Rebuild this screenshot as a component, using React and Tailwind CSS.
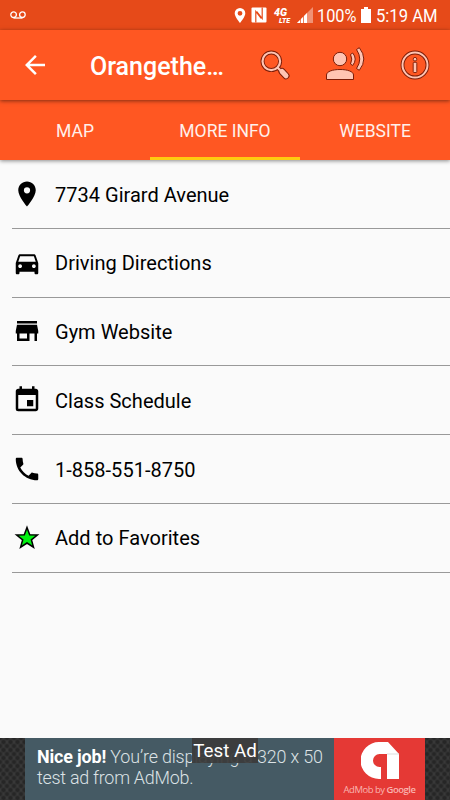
import React, { useState } from 'react';
import { MdArrowBack, MdDirectionsCar, MdEvent, MdPhone, MdPlace, MdStore } from 'react-icons/md';

const TABS = ['MAP', 'MORE INFO', 'WEBSITE'];

const StarIcon = () => (
  <svg viewBox="0 0 30 30" className="size-[30px]">
    <path
      d="M15 4.5l2.7 7.2 7.7.3-6 4.8 2.1 7.4-6.5-4.2-6.4 4.2 2.1-7.4-6.1-4.8 7.7-.3z"
      fill="#00f010"
      stroke="#000"
      strokeWidth="1.5"
    />
  </svg>
);

const ROWS = [
  { icon: MdPlace, label: '7734 Girard Avenue' },
  { icon: MdDirectionsCar, label: 'Driving Directions' },
  { icon: MdStore, label: 'Gym Website' },
  { icon: MdEvent, label: 'Class Schedule' },
  { icon: MdPhone, label: '1-858-551-8750' },
  { icon: StarIcon, label: 'Add to Favorites' },
];

const StatusBar = () => (
  <div className="flex h-[30px] shrink-0 items-center bg-[#e64a19] pl-2.5 text-white">
    <svg viewBox="0 0 16 8" className="h-2 w-4" fill="none" stroke="currentColor" strokeWidth="1.3">
      <circle cx="3.6" cy="3.7" r="2.8" />
      <circle cx="12.4" cy="3.7" r="2.8" />
      <path d="M3.6 7h8.8" />
    </svg>
    <div className="ml-auto flex items-center pr-3">
      <svg viewBox="0 0 12 17" className="h-[17px] w-3">
        <path
          d="M6 1a5.3 5.3 0 0 0-5.3 5.3C.7 10 6 16 6 16s5.300-6 5.300-9.700A5.300 5.300 0 0 0 6 1zm0 2.900a2.400 2.400 0 1 1 0 4.800 2.400 2.400 0 0 1 0-4.800z"
          fill="currentColor"
          fillRule="evenodd"
        />
      </svg>
      <svg viewBox="0 0 16 16" className="ml-[5px] size-4">
        <path d="M1.500.5h13q1 0 1 1v13q0 1-1 1h-13q-1 0-1-1v-13q0-1 1-1z" fill="#fff" />
        <path d="M4.800 15.500V4.500l5.400 7M11.200 .5v11l-5.400-7" fill="none" stroke="#e64a19" strokeWidth="1.200" />
      </svg>
      <svg viewBox="0 0 17 16" className="ml-[7px] h-4 w-[17px] overflow-visible" fill="currentColor">
        <text x="0" y="9" fontSize="10" fontWeight="900" fontStyle="italic" textLength="13" lengthAdjust="spacingAndGlyphs">4G</text>
        <text x="5" y="16" fontSize="7.500" fontWeight="900" fontStyle="italic" textLength="11" lengthAdjust="spacingAndGlyphs">LTE</text>
      </svg>
      <svg viewBox="0 0 17 16" className="ml-[5px] h-4 w-[17px]">
        <path d="M1 16L17 0v16z" fill="#fff" fillOpacity="0.4" />
        <path d="M1 16l10-10v10z" fill="#fff" />
        <path d="M4.500 9v7M7.500 6v10" stroke="#e64a19" strokeWidth="0.700" />
      </svg>
      <svg viewBox="0 0 40 24" className="ml-1 h-6 w-10 overflow-visible" fill="currentColor">
        <text x="0" y="19" fontSize="18.500" textLength="39.500" lengthAdjust="spacingAndGlyphs">100%</text>
      </svg>
      <svg viewBox="0 0 10 16" className="ml-1 h-4 w-2.5" fill="currentColor">
        <path d="M3 0h4v2h3v14H0V2h3z" />
      </svg>
      <svg viewBox="0 0 63 24" className="ml-1 h-6 w-[63px] overflow-visible" fill="currentColor">
        <text x="1" y="19" fontSize="18.500" textLength="61.500" lengthAdjust="spacingAndGlyphs">5:19 AM</text>
      </svg>
    </div>
  </div>
);

const SearchIcon = () => (
  <svg viewBox="0 0 30 30" className="size-[30px]" fill="none">
    <g stroke="#7c1d08">
      <circle cx="11.300" cy="11.300" r="8.800" strokeWidth="4" />
      <path d="M17.500 17.500l3 3" strokeWidth="4" />
      <path d="M22 21.500l4 4.300" strokeWidth="7" strokeLinecap="round" />
    </g>
    <g stroke="#ffc4b3">
      <circle cx="11.300" cy="11.300" r="8.800" strokeWidth="2.200" />
      <path d="M17.500 17.500l3 3" strokeWidth="2.200" />
      <path d="M22 21.500l4 4.300" strokeWidth="5" strokeLinecap="round" />
    </g>
  </svg>
);

const SpeakIcon = () => (
  <svg viewBox="0 0 40 34" className="h-[34px] w-10 overflow-visible" fill="#ffc4b3" stroke="#7c1d08">
    <circle cx="15" cy="12" r="6.700" />
    <path d="M1.500 32.500v-4.500c0-3.500 6-5.500 13.500-5.500s13.500 2 13.500 5.500v4.500z" />
    <path d="M25.500 7.500q2.500 4.500 0 9.500l2.200 1.500q5-6.500 0-12.500z" />
    <path d="M31.500 2.500q6.500 9.500 0 19l2.800 1.800q9-11.300 0-22.600z" />
  </svg>
);

const InfoIcon = () => (
  <svg viewBox="0 0 30 30" className="size-[30px]" fill="none">
    <circle cx="15" cy="15" r="12.500" stroke="#7c1d08" strokeWidth="3.800" />
    <circle cx="15" cy="15" r="12.500" stroke="#ffc4b3" strokeWidth="2" />
    <g fill="#ffc4b3" stroke="#7c1d08" strokeWidth="0.900">
      <circle cx="15" cy="9.200" r="1.800" />
      <rect x="13.200" y="12.300" width="3.600" height="10.200" rx="0.800" />
    </g>
  </svg>
);

const Toolbar = () => (
  <div className="relative z-10 flex h-[70px] shrink-0 items-center bg-[#ff5722] text-white shadow-[0_1px_4px_rgba(0,0,0,0.5)]">
    <MdArrowBack size={30} className="ml-5" />
    <h1 className="mt-1 ml-10 w-[140px] text-[25px] leading-8 font-medium whitespace-nowrap">Orangethe…</h1>
    <div className="ml-[30px]">
      <SearchIcon />
    </div>
    <div className="-mt-0.5 ml-[35px]">
      <SpeakIcon />
    </div>
    <div className="ml-[35px]">
      <InfoIcon />
    </div>
  </div>
);

const AdBanner = () => (
  <div className="relative flex h-[62px] shrink-0 bg-[#3a3a3a] bg-[radial-gradient(circle,#262626_25%,transparent_60%),radial-gradient(circle,#262626_25%,transparent_60%)] bg-[size:7px_8px] bg-[position:0_0,3.5px_4px]">
    <div className="ml-[25px] w-[309px] bg-[#455a64] pt-2 pl-3 text-[17.900px] leading-[21px] font-light tracking-[-0.150px] text-[#dce2e5]">
      <p className="whitespace-nowrap">
        <span className="font-bold tracking-[-0.150px] text-white">Nice job!</span> You’re displaying a 320 x 50
      </p>
      <p className="tracking-[-0.250px]">test ad from AdMob.</p>
    </div>
    <div className="flex w-[91px] flex-col items-center bg-[#e53935]">
      <svg viewBox="0 0 38 38" className="mt-1 h-[38px] w-[38px]">
        <path d="M18 0h9l11 12H18.500a6.500 6.500 0 0 0 0 13H20v12h-2A18.500 18.500 0 0 1 18 0z" fill="#fff" />
        <path d="M26 12h12v25H26z" fill="#fff" />
        <path d="M26 12h12" stroke="#ddd" />
      </svg>
      <span className="mt-0.5 font-['Open_Sans'] text-[9.500px] leading-[15px] tracking-[-0.500px] whitespace-nowrap text-[#f9b4b0]">
        AdMob by <span className="font-semibold">Google</span>
      </span>
    </div>
    <div className="absolute top-0 left-[192px] h-[25px] w-[66px] bg-[#3c3c3c]/95 text-center text-[18.750px] leading-[27px] whitespace-nowrap text-white">
      Test Ad
    </div>
  </div>
);

const App = () => {
  const [activeTab, setActiveTab] = useState('MORE INFO');

  return (
    <div className="flex h-[800px] w-[450px] flex-col overflow-hidden bg-[#fafafa] font-['Roboto',sans-serif]">
      <StatusBar />
      <Toolbar />

      {/* Tabs */}
      <div className="grid h-[60px] shrink-0 grid-cols-3 bg-[#ff5722] shadow-[0_1px_4px_rgba(0,0,0,0.45)]">
        {TABS.map((tab) => (
          <button
            key={tab}
            onClick={() => setActiveTab(tab)}
            className={`border-b-3 pt-1.5 text-[17.500px] text-[#fff0eb] ${
              activeTab === tab ? 'border-[#ffca10]' : 'border-transparent'
            }`}
          >
            {tab}
          </button>
        ))}
      </div>

      {/* Place details */}
      <ul className="flex-1 pl-[12.400px]">
        {ROWS.map(({ icon: Icon, label }) => (
          <li key={label} className="flex h-[68.750px] items-center border-b border-[#999] text-black">
            <Icon size={30} />
            <span className="mt-[1.500px] ml-[12.600px] text-[20px] tracking-[0.020px] whitespace-nowrap">{label}</span>
          </li>
        ))}
      </ul>

      <AdBanner />
    </div>
  );
};

export default App;
